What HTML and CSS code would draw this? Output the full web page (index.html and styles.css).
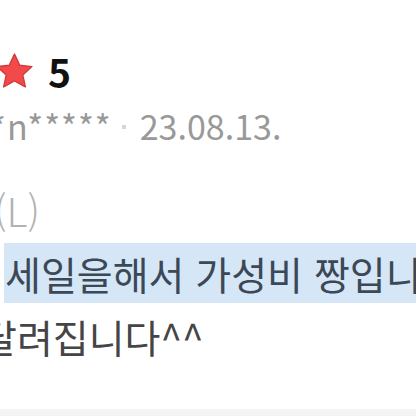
FILE: index.html
```html
<!DOCTYPE html>
<html lang="ko">
<head>
    <meta charset="UTF-8">
    <meta name="viewport" content="width=device-width, initial-scale=1.0">
    <title>리뷰</title>
    <link rel="stylesheet" href="styles.css">
</head>
<body>
    <div class="review">
        <div class="rating">
            <svg class="star" viewBox="0 0 24 23" width="41" height="39">
                <path d="M12 1.2l3.1 6.6 7.2.8-5.4 4.9 1.5 7.1L12 17l-6.4 3.6 1.5-7.1L1.7 8.6l7.2-.8z" fill="#f24a4a" stroke="#d23a3a" stroke-width="0.8" stroke-linejoin="round"/>
            </svg>
            <span class="score">5</span>
        </div>
        <div class="meta">
            <span class="user">*n*****</span>
            <span class="sep"></span>
            <span class="date">23.08.13.</span>
        </div>
        <div class="option">(L)</div>
        <div class="content">
            <div class="line highlight">세일을해서 가성비 짱입니다</div>
            <div class="line rest">달려집니다^^</div>
        </div>
    </div>
    <div class="divider"></div>
</body>
</html>
```

FILE: styles.css
```css
html, body {
    margin: 0;
    padding: 0;
    background: #fff;
    overflow: hidden;
}

body {
    width: 416px;
    height: 416px;
    position: relative;
    font-family: "Noto Sans CJK KR", "Noto Sans", sans-serif;
}

.review {
    padding-top: 49px;
}

.rating {
    display: flex;
    align-items: center;
    gap: 13px;
    margin-left: -6px;
    height: 44px;
}

.score {
    font-size: 39px;
    font-weight: bold;
    color: #111;
    line-height: 1;
}

.meta {
    display: flex;
    align-items: center;
    margin-top: 7px;
    margin-left: -10px;
    height: 50px;
    color: #999;
    font-size: 34px;
}

.user {
    letter-spacing: 1px;
}

.sep {
    width: 4px;
    height: 4px;
    background: #d6d6d6;
    margin: 4px 14px 0 10px;
}

.option {
    margin-top: 35px;
    margin-left: -6px;
    font-size: 40px;
    font-weight: 300;
    color: #b3b3b3;
    height: 50px;
    line-height: 50px;
}

.content {
    margin-top: 8px;
    font-size: 39px;
}

.line {
    height: 60px;
    line-height: 60px;
    white-space: nowrap;
}

.highlight {
    margin-left: 4px;
    padding-left: 1px;
    background: #d5e6f7;
    color: #3c4856;
}

.rest {
    margin-top: 3px;
    margin-left: -19px;
    color: #454545;
}

.divider {
    position: absolute;
    left: 0;
    right: 0;
    bottom: 0;
    height: 7px;
    background: #f4f4f4;
}
```
